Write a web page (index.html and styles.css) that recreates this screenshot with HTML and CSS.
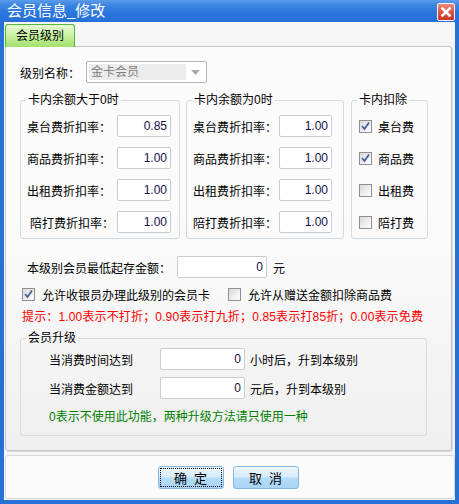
FILE: index.html
```html
<!DOCTYPE html>
<html lang="zh-CN">
<head>
    <meta charset="UTF-8">
    <title>会员信息_修改</title>
    <link rel="stylesheet" href="styles.css">
</head>
<body>
    <div class="window">
        <div class="titlebar">
            <span class="title">会员信息_修改</span>
            <span class="close-btn">
                <svg width="16" height="16" viewBox="0 0 16 16"><path d="M4.5 4.5 L11.5 11.5 M11.5 4.5 L4.5 11.5" stroke="#fff" stroke-width="2.6" stroke-linecap="square"/></svg>
            </span>
        </div>

        <div class="client">
            <div class="tabs">
                <div class="tab active">会员级别</div>
            </div>

            <div class="panel">
                <div class="row level-row">
                    <span class="label">级别名称：</span>
                    <div class="combo">
                        <span>金卡会员</span>
                        <svg width="9" height="5" viewBox="0 0 9 5"><path d="M0 0 L9 0 L4.5 5 Z" fill="#a8a8a8"/></svg>
                    </div>
                </div>

                <div class="groups">
                    <fieldset class="group g1">
                        <legend>卡内余额大于0时</legend>
                        <div class="rate-row"><span class="label">桌台费折扣率：</span><input class="num" value="0.85"></div>
                        <div class="rate-row"><span class="label">商品费折扣率：</span><input class="num" value="1.00"></div>
                        <div class="rate-row"><span class="label">出租费折扣率：</span><input class="num" value="1.00"></div>
                        <div class="rate-row"><span class="label indent">陪打费折扣率：</span><input class="num" value="1.00"></div>
                    </fieldset>

                    <fieldset class="group g2">
                        <legend>卡内余额为0时</legend>
                        <div class="rate-row"><span class="label">桌台费折扣率：</span><input class="num" value="1.00"></div>
                        <div class="rate-row"><span class="label">商品费折扣率：</span><input class="num" value="1.00"></div>
                        <div class="rate-row"><span class="label">出租费折扣率：</span><input class="num" value="1.00"></div>
                        <div class="rate-row"><span class="label">陪打费折扣率：</span><input class="num" value="1.00"></div>
                    </fieldset>

                    <fieldset class="group g3">
                        <legend>卡内扣除</legend>
                        <div class="rate-row"><span class="check on"></span><span>桌台费</span></div>
                        <div class="rate-row"><span class="check on"></span><span>商品费</span></div>
                        <div class="rate-row"><span class="check"></span><span>出租费</span></div>
                        <div class="rate-row"><span class="check"></span><span>陪打费</span></div>
                    </fieldset>
                </div>

                <div class="row min-row">
                    <span class="label">本级别会员最低起存金额：</span>
                    <input class="num wide" value="0">
                    <span>元</span>
                </div>

                <div class="row check-row">
                    <span class="opt"><span class="check on"></span>允许收银员办理此级别的会员卡</span>
                    <span class="opt opt2"><span class="check"></span>允许从赠送金额扣除商品费</span>
                </div>

                <div class="hint">提示：1.00表示不打折；0.90表示打九折；0.85表示打85折；0.00表示免费</div>

                <fieldset class="group upgrade">
                    <legend>会员升级</legend>
                    <div class="up-row"><span class="up-label">当消费时间达到</span><input class="num up" value="0"><span>小时后，升到本级别</span></div>
                    <div class="up-row"><span class="up-label">当消费金额达到</span><input class="num up" value="0"><span>元后，升到本级别</span></div>
                    <div class="note">0表示不使用此功能，两种升级方法请只使用一种</div>
                </fieldset>
            </div>

            <div class="footer">
                <button class="btn focused"><span>确&nbsp;&nbsp;定</span></button>
                <button class="btn"><span>取&nbsp;&nbsp;消</span></button>
            </div>
        </div>
    </div>
</body>
</html>
```

FILE: styles.css
```css
body {
    margin: 0;
    font-family: "Liberation Sans", "Noto Sans CJK SC", sans-serif;
    font-size: 12px;
    color: #000;
    background: #fff;
}
.window {
    width: 459px;
    height: 504px;
    box-sizing: border-box;
    padding: 0 4px 4px 4px;
    background: #2670d8;
    display: flex;
    flex-direction: column;
}
.titlebar {
    height: 22px;
    margin: 0 -4px;
    padding: 0 4px 0 7px;
    display: flex;
    align-items: center;
    justify-content: space-between;
    background: linear-gradient(#5b9ceb 0%, #3b84e2 25%, #2a76dc 60%, #2670d8 100%);
}
.title {
    color: #fff;
    font-size: 15px;
    line-height: 18px;
}
.close-btn {
    width: 16px;
    height: 16px;
    margin-top: 1px;
    border: 1px solid #f4f4f4;
    border-radius: 2px;
    background: linear-gradient(#f08a7c, #dc4e3c 55%, #c83a28);
    display: flex;
}
.client {
    flex: 1;
    background: #f6f6f6;
    padding: 2px 0 1px 1px;
    display: flex;
    flex-direction: column;
}
.tabs {
    display: flex;
    height: 23px;
}
.tab {
    width: 70px;
    box-sizing: border-box;
    border: 1px solid #54b838;
    border-bottom: none;
    border-radius: 3px 3px 0 0;
    background: linear-gradient(#e8fad6, #c6f0a0 50%, #a2e06c);
    text-align: center;
    line-height: 22px;
    position: relative;
    z-index: 1;
}
.panel {
    margin-top: -1px;
    width: 447px;
    height: 405px;
    box-sizing: border-box;
    border: 1px solid #c4c4c4;
    border-radius: 0 3px 3px 3px;
    box-shadow: 1px 1px 0 #dcdcdc;
    background: linear-gradient(#fbfbfb, #fafafa 50%, #efefef);
    padding: 14px 0 0 14px;
}
.row {
    display: flex;
    align-items: center;
}
.level-row {
    height: 22px;
}
.level-row .label {
    width: 66px;
}
.combo {
    width: 121px;
    height: 22px;
    box-sizing: border-box;
    border: 1px solid #b4b4b4;
    border-radius: 2px;
    background: #fff;
    padding: 2px;
    display: flex;
    align-items: center;
}
.combo span {
    flex: 1;
    height: 16px;
    line-height: 16px;
    background: #ececec;
    color: #808080;
    padding-left: 2px;
}
.combo svg {
    margin: 0 4px 0 5px;
}
.groups {
    display: flex;
    margin-top: 10px;
}
.group {
    margin: 0;
    border: 1px solid #d2dae2;
    border-radius: 3px;
    padding: 8px 0 5px 0;
    box-sizing: border-box;
}
.group legend {
    padding: 0 2px;
    margin-left: 5px;
    line-height: 14px;
}
.g1 { width: 160px; }
.g2 { width: 158px; margin-left: 6px; }
.g3 { width: 77px; margin-left: 7px; }
.rate-row {
    height: 22px;
    display: flex;
    align-items: center;
    margin-bottom: 10px;
    padding-left: 6px;
}
.rate-row:last-child {
    margin-bottom: 0;
}
.g1 .label { width: 90px; }
.g2 .label { width: 86px; }
.label.indent { padding-left: 3px; box-sizing: border-box; }
.g3 .rate-row { padding-left: 7px; }
.g3 .check { margin-right: 6px; }
input.num {
    height: 22px;
    box-sizing: border-box;
    border: 1px solid #c9cdd2;
    border-radius: 2px;
    background: #fff;
    text-align: right;
    padding: 0 3px 0 0;
    margin: 0;
    font-family: "Liberation Sans", sans-serif;
    font-size: 12px;
    color: #10104a;
    width: 54px;
}
.g2 input.num { width: 53px; }
.check {
    width: 13px;
    height: 13px;
    box-sizing: border-box;
    border: 1px solid #8e8f8f;
    background: linear-gradient(135deg, #d8d8d8, #f4f4f4 70%, #fff);
    display: inline-block;
    flex: none;
}
.check.on {
    background-image: url("data:image/svg+xml;utf8,<svg xmlns='http://www.w3.org/2000/svg' width='11' height='11'><path d='M2 5 L4.5 8 L9 1.5' fill='none' stroke='%234a5f9c' stroke-width='1.8'/></svg>"), linear-gradient(135deg, #d8d8d8, #f4f4f4 70%, #fff);
    background-repeat: no-repeat;
}
.min-row {
    margin-top: 17px;
    height: 22px;
    padding-left: 7px;
}
.min-row .label { width: 150px; }
input.num.wide {
    width: 90px;
    margin-right: 6px;
}
.check-row {
    margin-top: 5px;
    height: 22px;
    padding-left: 2px;
}
.opt {
    display: flex;
    align-items: center;
}
.opt .check { margin-right: 7px; }
.opt2 { margin-left: 18px; }
.hint {
    margin-top: 5px;
    padding-left: 2px;
    line-height: 14px;
    letter-spacing: 0.15px;
    color: #ff0000;
}
.upgrade {
    width: 407px;
    margin-top: 7px;
    padding: 3px 0 11px 0;
}
.up-row {
    height: 22px;
    display: flex;
    align-items: center;
    margin-bottom: 7px;
    padding-left: 28px;
}
.up-label { width: 111px; }
input.num.up {
    width: 85px;
    margin-right: 5px;
}
.note {
    margin-top: 11px;
    padding-left: 28px;
    line-height: 14px;
    color: #008000;
}
.footer {
    flex: 1;
    margin-top: 4px;
    border: 1px solid #d8d8d8;
    border-radius: 3px;
    background: #fbfbfb;
    display: flex;
    justify-content: center;
    align-items: center;
    gap: 9px;
    padding-right: 4px;
}
.btn {
    width: 66px;
    height: 23px;
    padding: 1px;
    border: 1px solid #86b6e2;
    border-radius: 3px;
    background: linear-gradient(#eef7fe, #d6ebfc 45%, #b4dcf8 55%, #a8d4f6);
    font-family: "Liberation Sans", "Noto Sans CJK SC", sans-serif;
    font-size: 13px;
    color: #000;
    display: flex;
}
.btn span {
    flex: 1;
    border: 1px dotted transparent;
    display: flex;
    align-items: center;
    justify-content: center;
}
.btn.focused span {
    border-color: #000;
}
```
